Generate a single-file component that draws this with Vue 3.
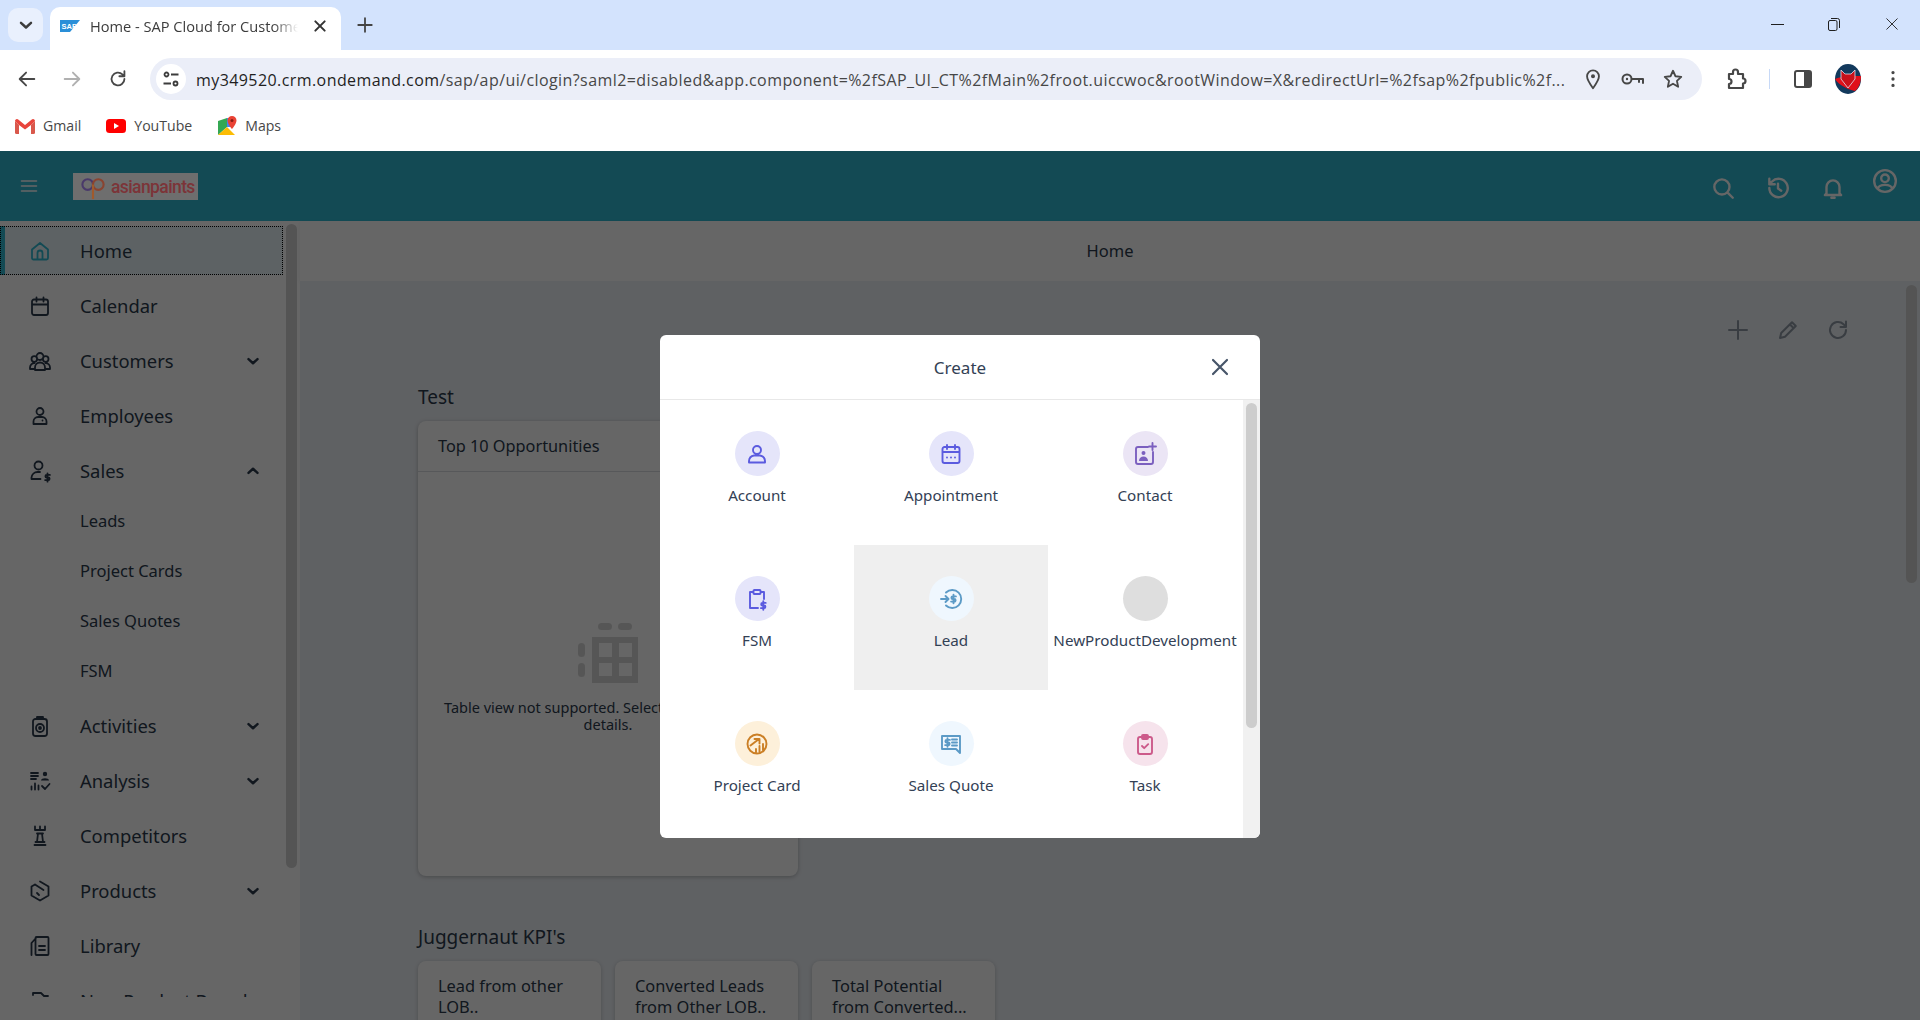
<script setup>
import { h } from 'vue'

const c = (x, y, r) => `M${x - r} ${y}a${r} ${r} 0 1 0 ${2 * r} 0a${r} ${r} 0 1 0 ${-2 * r} 0`
const rr = (x, y, w, he, r) =>
  `M${x + r} ${y}h${w - 2 * r}a${r} ${r} 0 0 1 ${r} ${r}v${he - 2 * r}a${r} ${r} 0 0 1 ${-r} ${r}h${-(w - 2 * r)}a${r} ${r} 0 0 1 ${-r} ${-r}v${-(he - 2 * r)}a${r} ${r} 0 0 1 ${r} ${-r}`
const dollar = (x, y) =>
  `M${x + 2.4} ${y - 2.6}h-3.2a1.3 1.3 0 0 0 0 2.6h1.6a1.3 1.3 0 0 1 0 2.6h-3.2M${x} ${y - 4.2}v8.4`

const icons = {
  home: { s: 'M4 10.5 12 4l8 6.5V19a1.5 1.5 0 0 1-1.5 1.5h-13A1.5 1.5 0 0 1 4 19ZM9.5 20.5V14a2.5 2.5 0 0 1 5 0v6.5' },
  calendar: { s: rr(4, 5.5, 16, 15.5, 2) + 'M4 10.5h16M8.5 3.5v4M15.5 3.5v4' },
  customers: { s: c(12, 7.5, 3.5) + c(6.3, 10, 2.8) + c(17.7, 10, 2.8) + 'M7 21v-2.5a5 5 0 0 1 10 0V21ZM7 20H2v-1.5a4.5 4.5 0 0 1 4.5-4.5M17 20h5v-1.5a4.5 4.5 0 0 0-4.5-4.5' },
  employees: { s: c(12, 7.5, 3.5) + 'M5.5 20V17.5a4.5 4.5 0 0 1 4.5-4.5h4a4.5 4.5 0 0 1 4.5 4.5V20ZM14.5 16.5h.01' },
  sales: { s: c(10.5, 6.5, 4) + 'M3.5 20v-1.5a6 6 0 0 1 6-5.5h2.5M3.5 20h9' + dollar(19.5, 18.5) },
  activities: { s: rr(5, 5, 14, 17, 2.5) + 'M9 5V3h6v2' + c(12, 14, 4) + c(12, 14, 1) },
  analysis: { s: 'M3 4h7M3 7h7M3 10h5M3.5 20.5v-3M7 20.5v-6M10.5 20.5v-4M14 17l3 3 4.5-5', f: c(17, 5, 2.2) + 'M13 11.5c0-3 8-3 8 0Z' },
  competitors: { s: 'M7 2.5v3.5h10V2.5M12 2.5v3.5M9 9.5h6M10 9.5 9 18M14 9.5l1 8.5M7.5 18h9M6.5 21h11' },
  products: { s: 'M12 2.5l8.5 5v9l-8.5 5-8.5-5v-9l3.5-2M7 5.5l8.5 5.5M9 14l2 2' },
  library: { s: rr(7.5, 3, 13, 18, 1) + 'M3.5 21V9L8 4M11 12h6M11 16h6' },
  next: { s: 'M5 6V4h8l3 3h4' },
  down: { s: 'M6 9.5l6 5.5 6-5.5' },
  up: { s: 'M6 14.5l6-5.5 6 5.5' },
  search: { s: c(11, 11, 7) + 'M16 16l5 5' },
  history: { s: 'M4 12a8.5 8.5 0 1 0 2.5-6L4 8.5M4 3.5v5h5M12 8v4.5l3 2' },
  bell: { s: 'M6 17V11a6 6 0 0 1 12 0v6l1.5 1.5h-15ZM10.5 21h3' },
  user: { s: c(12, 12, 10) + c(12, 9.5, 3.5) + 'M5.5 19c1-4.5 12-4.5 13 0' },
  menu: { s: 'M3 6h18M3 12h18M3 18h18' },
  plus: { s: 'M12 3v18M3 12h18' },
  pencil: { s: 'M4 20l1.2-5L16 4.200 19.800 8 9 18.800ZM14 6.500l3.500 3.500' },
  refresh: { s: 'M20 12a8 8 0 1 1-2.500-5.800L20 9M20 3.500V9h-5.500' },
  close: { s: 'M5 5l14 14M19 5 5 19' },
  account: { s: c(12, 8, 4) + 'M4 20.5v-1.5a6 6 0 0 1 5-5.5h6a6 6 0 0 1 5 5.5v1.5Z' },
  appointment: { s: rr(3.5, 5, 17, 16, 2) + 'M3.5 10h17M8 3v4M16 3v4M8 15.5h.01M12 15.5h.01M16 15.5h.01' },
  contact: { s: 'M15 5H5a2 2 0 0 0-2 2v13a2 2 0 0 0 2 2h13a2 2 0 0 0 2-2V10M19.5 1v7M16 4.5h7', f: c(10.5, 11, 2) + 'M6 19c0-3 2-4.5 4.5-4.5S15 16 15 19Z' },
  fsm: { s: 'M8.5 5H5v16h8M15.5 5H19v7' + rr(8.5, 3, 7, 4, .8) + dollar(18.3, 18.5) },
  lead: { s: 'M7 5.5A9 9 0 1 1 7 18.5M2 12h7M6.5 9l3 3-3 3' + dollar(14.5, 12) },
  project: { s: c(12, 12, 9.5) + 'M5.5 13.5 14 7M9.5 7H14.5v4.5M11 20v-3M14.5 20v-6M18 18v-6' },
  quote: { s: 'M3 4h18v17l-4-4H3Z' + dollar(8.5, 10.5) + 'M13 7.5h5M13 10.5h5M13 13.5h5' },
  task: { s: rr(5, 5, 14, 17, 2) + rr(9, 3, 6, 4, 1) + 'M9 14l2.2 2.2 4-4' },
  back: { s: 'M20 12H5M11 5l-7 7 7 7' },
  reload: { s: 'M19 12a7 7 0 1 1-2.2-5.1L19 9M19 3.5V9h-5.5' },
  pin: { s: 'M12 22C8 16.5 5.5 13 5.5 9a6.5 6.5 0 0 1 13 0c0 4-2.5 7.5-6.5 13Z', f: c(12, 9, 2.2) },
  key: { s: c(7, 12, 4.5) + 'M11.5 12H23v4M19 12v3', f: c(7, 12, 1.2) },
  star: { s: 'M12 3l2.7 6 6.3.7-4.7 4.3 1.3 6.5L12 17.2 6.4 20.5l1.3-6.5L3 9.7 9.3 9Z' },
  ext: { s: 'M5 7h4V5a2.5 2.5 0 0 1 5 0v2h5v4.5a2.5 2.5 0 0 1 0 5V21H5v-4a2.5 2.5 0 0 0 0-5Z' },
  dots: { f: c(12, 5, 1.8) + c(12, 12, 1.8) + c(12, 19, 1.8) }
}

const Ico = (props) => {
  const icon = icons[props.name]
  const kids = []
  if (icon.s) kids.push(h('path', { d: icon.s, fill: 'none', stroke: 'currentColor', 'stroke-width': props.w || 1.8, 'stroke-linecap': 'round', 'stroke-linejoin': 'round' }))
  if (icon.f) kids.push(h('path', { d: icon.f, fill: 'currentColor' }))
  return h('svg', { viewBox: '0 0 24 24', width: props.size || 24, height: props.size || 24 }, kids)
}
Ico.props = ['name', 'size', 'w']

const urlHost = 'my349520.crm.ondemand.com'
const urlRest = '/sap/ap/ui/clogin?saml2=disabled&app.component=%2fSAP_UI_CT%2fMain%2froot.uiccwoc&rootWindow=X&redirectUrl=%2fsap%2fpublic%2f...'

const navItems = [
  { label: 'Home', icon: 'home', active: true },
  { label: 'Calendar', icon: 'calendar' },
  { label: 'Customers', icon: 'customers', arrow: 'down' },
  { label: 'Employees', icon: 'employees' },
  { label: 'Sales', icon: 'sales', arrow: 'up', children: ['Leads', 'Project Cards', 'Sales Quotes', 'FSM'] },
  { label: 'Activities', icon: 'activities', arrow: 'down' },
  { label: 'Analysis', icon: 'analysis', arrow: 'down' },
  { label: 'Competitors', icon: 'competitors' },
  { label: 'Products', icon: 'products', arrow: 'down' },
  { label: 'Library', icon: 'library' },
  { label: 'New Product Board', icon: 'next' }
]

const kpis = [
  ['Lead from other', 'LOB..'],
  ['Converted Leads', 'from Other LOB..'],
  ['Total Potential', 'from Converted...']
]

const createItems = [
  { label: 'Account', icon: 'account', tone: 'indigo' },
  { label: 'Appointment', icon: 'appointment', tone: 'indigo' },
  { label: 'Contact', icon: 'contact', tone: 'purple' },
  { label: 'FSM', icon: 'fsm', tone: 'indigo' },
  { label: 'Lead', icon: 'lead', tone: 'blue', hover: true },
  { label: 'NewProductDevelopment', tone: 'grey' },
  { label: 'Project Card', icon: 'project', tone: 'orange' },
  { label: 'Sales Quote', icon: 'quote', tone: 'blue' },
  { label: 'Task', icon: 'task', tone: 'pink' }
]
</script>

<template>
  <div class="page">
    <div class="tabstrip">
      <div class="tab-list-btn"><Ico name="down" size="20" w="3" /></div>
      <div class="tab">
        <svg class="favicon" viewBox="0 0 20 12" width="20" height="12">
          <path d="M0 0h20L10 12H0Z" fill="#2a8fd8" />
          <text x="1.5" y="8.5" font-size="7.5" font-weight="700" fill="#fff" font-family="Liberation Sans">SAP</text>
        </svg>
        <span class="tab-title">Home - SAP Cloud for Customer</span>
        <Ico class="tab-close" name="close" size="16" w="3" />
      </div>
      <Ico class="new-tab" name="plus" size="18" w="2.4" />
      <div class="win-controls">
        <span class="win-min"></span>
        <svg viewBox="0 0 14 14" width="14" height="14" fill="none" stroke="#1f1f1f">
          <rect x="1.5" y="3.5" width="8.5" height="10" rx="1.5" />
          <path d="M4 1.5h6.5a2 2 0 0 1 2 2V11" />
        </svg>
        <Ico name="close" size="18" w="1.2" />
      </div>
    </div>

    <div class="toolbar">
      <Ico class="tb-icon back" name="back" size="22" w="2" />
      <Ico class="tb-icon forward" name="back" size="22" w="2" />
      <Ico class="tb-icon reload" name="reload" size="22" w="2" />
      <div class="omnibox">
        <span class="site-info">
          <svg viewBox="0 0 18 18" width="18" height="18" fill="none" stroke="#3c3c3c" stroke-width="1.8">
            <circle cx="4.5" cy="4.5" r="2" />
            <circle cx="13.5" cy="13.5" r="2" />
            <path d="M9 4.5h7.5M1.5 13.5H9" />
          </svg>
        </span>
        <span class="url"><b>{{ urlHost }}</b>{{ urlRest }}</span>
        <Ico class="omni-icon" name="pin" size="22" w="2" />
        <Ico class="omni-icon key" name="key" size="24" w="2" />
        <Ico class="omni-icon" name="star" size="22" w="2" />
      </div>
      <Ico class="tb-icon ext" name="ext" size="24" w="2.2" />
      <span class="tb-divider"></span>
      <svg class="panel-icon" viewBox="0 0 18 18" width="18" height="18">
        <rect x="1" y="1" width="16" height="16" rx="2" fill="#fff" stroke="#474747" stroke-width="2" />
        <rect x="10" y="1" width="7" height="16" fill="#474747" />
      </svg>
      <svg class="avatar" viewBox="0 0 26 30" width="26" height="30">
        <ellipse cx="13" cy="15" rx="13" ry="15" fill="#12395c" />
        <path d="M0 15c6-3 20-3 26-3 0 6-2 12-6 15-8-2-16-6-20-12Z" fill="#e0101a" />
        <path d="M6 6l4 4h6l4-4v9l-7 9-7-9Z" fill="#c8101a" stroke="#dde" stroke-width=".8" />
      </svg>
      <Ico class="tb-icon dots" name="dots" size="22" />
    </div>

    <div class="bookmarks">
      <span class="bm">
        <svg viewBox="0 0 20 16" width="20" height="16">
          <path d="M0 3v11.5A1.5 1.5 0 0 0 1.500 16H4V7Z" fill="#d9584c" />
          <path d="M20 3v11.500a1.500 1.500 0 0 1-1.500 1.500H16V7Z" fill="#d9584c" />
          <path d="M0 3a2 2 0 0 1 3.200-1.600L10 7l6.800-5.600A2 2 0 0 1 20 3L16 7l-6 4.500L4 7Z" fill="#e8453c" />
        </svg>
        Gmail
      </span>
      <span class="bm">
        <svg viewBox="0 0 20 16" width="20" height="16">
          <rect width="20" height="14" y="1" rx="3.500" fill="#f00" />
          <path d="M8 5l5 3-5 3Z" fill="#fff" />
        </svg>
        YouTube
      </span>
      <span class="bm">
        <svg viewBox="0 0 20 20" width="20" height="20">
          <path d="M1 5l9-3v9l-9 8Z" fill="#34a853" />
          <path d="M1 19l9-8 8 8Z" fill="#fbbc04" />
          <path d="M10 2h6v9h-6Z" fill="#4285f4" />
          <path d="M15 0a4.500 4.500 0 0 1 4.500 4.500C19.500 8 15 13 15 13s-4.500-5-4.500-8.500A4.500 4.500 0 0 1 15 0Z" fill="#ea4335" />
          <circle cx="15" cy="4.500" r="1.500" fill="#8a1c14" />
        </svg>
        Maps
      </span>
    </div>

    <div class="app">
      <header class="app-header">
        <Ico class="hamburger" name="menu" size="20" w="1.9" />
        <div class="logo">
          <svg viewBox="0 0 26 28" width="26" height="27" fill="none" stroke-width="2.2">
            <circle cx="7.500" cy="12" r="5.500" stroke="#4a3a6a" />
            <circle cx="18.500" cy="12" r="5.500" stroke="#8a4430" />
            <path d="M13 12v15" stroke="#a05a2c" />
          </svg>
          <span>asianpaints</span>
        </div>
        <div class="header-icons">
          <Ico name="search" size="26" w="2.2" />
          <Ico name="history" size="26" w="2.2" />
          <Ico name="bell" size="26" w="2.2" />
          <Ico class="raised" name="user" size="26" w="2.2" />
        </div>
      </header>

      <div class="main">
        <aside class="sidebar">
          <nav class="nav">
            <template v-for="item in navItems" :key="item.label">
              <div class="nav-item" :class="{ active: item.active }">
                <Ico class="nav-icon" :name="item.icon" />
                <span class="nav-label">{{ item.label }}</span>
                <Ico v-if="item.arrow" class="nav-arrow" :name="item.arrow" size="18" w="3.2" />
              </div>
              <div v-for="child in item.children" :key="child" class="nav-sub">{{ child }}</div>
            </template>
          </nav>
          <div class="scroll-track"><div class="side-thumb"></div></div>
        </aside>

        <section class="content">
          <div class="content-title">Home</div>
          <div class="content-body">
            <div class="content-inner">
              <div class="tools">
                <Ico name="plus" size="24" w="2" />
                <Ico name="pencil" size="24" w="2" />
                <Ico name="refresh" size="24" w="2" />
              </div>
              <h2 class="group-title">Test</h2>
              <div class="card">
                <div class="card-head">Top 10 Opportunities</div>
                <div class="card-empty">
                  <svg viewBox="0 0 60 60" width="60" height="60" fill="#d8d8d8">
                    <rect x="20" y="0" width="14" height="7" rx="3.500" />
                    <rect x="40" y="0" width="14" height="7" rx="3.500" />
                    <rect x="0" y="20" width="7" height="14" rx="3.500" />
                    <rect x="0" y="40" width="7" height="14" rx="3.500" />
                    <path fill-rule="evenodd" d="M14 14h47v46H14ZM21 20v14h13V20ZM41 20v14h13V20ZM21 40v13h13V40ZM41 40v13h13V40Z" />
                  </svg>
                  <p>Table view not supported. Select a chart view for<br />details.</p>
                </div>
              </div>
              <h2 class="group-title kpi-title">Juggernaut KPI's</h2>
              <div class="kpi-row">
                <div v-for="kpi in kpis" :key="kpi[0]" class="kpi">{{ kpi[0] }}<br />{{ kpi[1] }}</div>
              </div>
            </div>
            <div class="content-scroll"><div class="content-thumb"></div></div>
          </div>
        </section>
      </div>

      <div class="scrim">
        <div class="modal">
          <div class="modal-head">
            <span>Create</span>
            <Ico class="modal-close" name="close" size="24" w="2.2" />
          </div>
          <div class="modal-body">
            <div class="create-grid">
              <div v-for="item in createItems" :key="item.label" class="create-cell" :class="{ hover: item.hover }">
                <span class="create-circle" :class="item.tone">
                  <Ico v-if="item.icon" :name="item.icon" size="24" w="1.9" />
                </span>
                <span class="create-label">{{ item.label }}</span>
              </div>
            </div>
            <div class="modal-track"><div class="modal-thumb"></div></div>
          </div>
        </div>
      </div>
    </div>
  </div>
</template>

<style>
html,
body {
  margin: 0;
  overflow: hidden;
}
</style>

<style scoped>
.page {
  width: 1920px;
  height: 1020px;
  display: flex;
  flex-direction: column;
  overflow: hidden;
  background: #fff;
  font-family: "Noto Sans", sans-serif;
}

/* browser chrome */
.tabstrip {
  height: 50px;
  flex: none;
  display: flex;
  align-items: flex-start;
  background: #d3e3fd;
  box-sizing: border-box;
  font-family: "Open Sans", sans-serif;
}
.tab-list-btn {
  width: 35px;
  height: 34px;
  margin: 8px 7px 0 8px;
  border-radius: 10px;
  background: #e9f0fd;
  color: #3c3c3c;
  display: flex;
  align-items: center;
  justify-content: center;
}
.tab {
  width: 291px;
  height: 43px;
  margin-top: 7px;
  background: #fff;
  border-radius: 10px 10px 0 0;
  display: flex;
  align-items: center;
  box-sizing: border-box;
  padding: 0 11px 6px 10px;
  color: #3c3c3c;
}
.favicon {
  flex: none;
  margin-right: 10px;
}
.tab-title {
  width: 208px;
  font-size: 14.6px;
  white-space: nowrap;
  overflow: hidden;
  -webkit-mask-image: linear-gradient(to right, #000 88%, transparent);
  mask-image: linear-gradient(to right, #000 88%, transparent);
}
.tab-close {
  margin-left: 14px;
  color: #333;
}
.new-tab {
  margin: 16px 0 0 15px;
  color: #444;
}
.win-controls {
  margin: 15px 19px 0 auto;
  display: flex;
  align-items: center;
  gap: 42px;
  color: #1f1f1f;
}
.win-min {
  width: 13px;
  height: 1px;
  background: #1f1f1f;
  margin-right: 1px;
}

.toolbar {
  height: 50px;
  flex: none;
  display: flex;
  align-items: center;
  background: #fff;
  color: #474747;
  border-radius: 10px 10px 0 0;
  font-family: "Open Sans", sans-serif;
}
.back {
  margin-left: 16px;
}
.forward {
  margin-left: 23px;
  color: #b0b0b0;
  transform: scaleX(-1);
}
.reload {
  margin-left: 24px;
}
.omnibox {
  width: 1552px;
  height: 42px;
  margin: 8px 0 0 21px;
  flex: none;
  border-radius: 21px;
  background: #ebeef8;
  display: flex;
  align-items: center;
  box-sizing: border-box;
  padding: 0 14px 0 6px;
}
.toolbar > svg {
  margin-top: 8px;
  flex: none;
}
.site-info {
  width: 30px;
  height: 30px;
  border-radius: 50%;
  background: #fff;
  flex: none;
  display: flex;
  align-items: center;
  justify-content: center;
  margin-right: 10px;
}
.url {
  width: 1372px;
  flex: none;
  padding-top: 1px;
  font-size: 16px;
  letter-spacing: .42px;
  white-space: nowrap;
  overflow: hidden;
  color: #474747;
}
.url b {
  font-weight: 400;
  color: #1f1f1f;
}
.omni-icon {
  flex: none;
  color: #474747;
  margin-left: 18px;
}
.url + .omni-icon {
  margin-left: 14px;
}
.omni-icon.key {
  margin-left: 16px;
}
.ext {
  margin-left: 22px;
  color: #474747;
}
.tb-divider {
  width: 1px;
  height: 20px;
  margin: 8px 0 0 21px;
  background: #c7d9f7;
}
.panel-icon {
  margin-left: 24px;
}
.avatar {
  margin-left: 23px;
}
.dots {
  margin-left: 21px;
}

.bookmarks {
  height: 51px;
  flex: none;
  display: flex;
  align-items: center;
  background: #fff;
  padding-left: 15px;
  gap: 25px;
  font-family: "Open Sans", sans-serif;
  font-size: 14.1px;
  color: #474747;
  box-sizing: border-box;
}
.bm {
  display: flex;
  align-items: center;
  gap: 8px;
}

/* app */
.app {
  position: relative;
  height: 869px;
  flex: none;
  display: flex;
  flex-direction: column;
  color: #334155;
}
.app-header {
  height: 70px;
  flex: none;
  display: flex;
  align-items: center;
  background: #30b9d2;
  color: #fff;
  padding-left: 19px;
  box-sizing: border-box;
}
.logo {
  position: relative;
  z-index: 2;
  width: 125px;
  height: 27px;
  margin: 1px 0 0 34px;
  background: #6e6e6e;
  display: flex;
  align-items: center;
  gap: 5px;
  padding-left: 7px;
  box-sizing: border-box;
  color: #7c3438;
  font-family: "Roboto", sans-serif;
  font-size: 17.5px;
  font-weight: 500;
  letter-spacing: -.6px;
}
.header-icons {
  margin-left: auto;
  padding-right: 22px;
  display: flex;
  gap: 29px;
  margin-top: 3px;
}
.raised {
  margin: -7px 0 0 -3px;
}

.main {
  flex: 1;
  min-height: 0;
  display: flex;
}
.sidebar {
  width: 300px;
  flex: none;
  display: flex;
  background: #fff;
}
.nav {
  width: 283px;
  height: 776px;
  padding-top: 5px;
  box-sizing: border-box;
  overflow: hidden;
  color: #2b3a4d;
}
.nav-item {
  height: 49px;
  margin-bottom: 6px;
  display: flex;
  align-items: center;
  padding-left: 28px;
  box-sizing: border-box;
  font-size: 18.4px;
}
.nav-item.active {
  background: #e8f6f9;
  box-shadow: inset 5px 0 0 #30b9d2;
  outline: 1px dotted #000;
  outline-offset: -1px;
}
.nav-item.active .nav-icon {
  color: #30b9d2;
}
.nav-icon {
  flex: none;
}
.nav-label {
  margin-left: 28px;
  white-space: nowrap;
}
.nav-arrow {
  margin-left: auto;
  margin-right: 21px;
}
.nav-sub {
  height: 40px;
  margin-bottom: 10px;
  padding: 0 0 2px 80px;
  box-sizing: border-box;
  display: flex;
  align-items: center;
  font-size: 16.5px;
}
.scroll-track {
  width: 17px;
  padding: 3px 3px 0;
  box-sizing: border-box;
}
.side-thumb {
  height: 644px;
  border-radius: 6px;
  background: #d2d2d2;
}

.content {
  flex: 1;
  min-width: 0;
  display: flex;
  flex-direction: column;
}
.content-title {
  height: 60px;
  flex: none;
  padding-bottom: 1px;
  box-sizing: border-box;
  display: flex;
  align-items: center;
  justify-content: center;
  background: #fff;
  font-size: 16.5px;
  color: #2b3a4d;
  box-shadow: 0 2px 6px rgba(0, 0, 0, .05);
}
.content-body {
  flex: 1;
  min-height: 0;
  display: flex;
  background: #eef2f7;
}
.content-inner {
  flex: 1;
  min-width: 0;
  padding: 37px 0 0 118px;
  box-sizing: border-box;
  overflow: hidden;
  color: #2b3a4d;
}
.tools {
  display: flex;
  justify-content: flex-end;
  gap: 26px;
  padding-right: 53px;
  height: 24px;
  color: #8e99a5;
}
.group-title {
  margin: 42px 0 0;
  font-size: 19px;
  font-weight: 400;
  line-height: 26px;
}
.card {
  width: 380px;
  height: 455px;
  margin-top: 11px;
  background: #fff;
  border-radius: 8px;
  box-shadow: 0 1px 4px rgba(0, 0, 0, .25);
  display: flex;
  flex-direction: column;
}
.card-head {
  height: 50px;
  flex: none;
  display: flex;
  align-items: center;
  padding-left: 20px;
  font-size: 16.3px;
  border-bottom: 1px solid #d9dde2;
}
.card-empty {
  flex: 1;
  display: flex;
  flex-direction: column;
  align-items: center;
  padding-top: 151px;
  font-size: 14.5px;
  text-align: center;
}
.card-empty p {
  margin: 16px 0 0;
  line-height: 17px;
  white-space: nowrap;
}
.kpi-title {
  margin-top: 48px;
}
.kpi-row {
  display: flex;
  gap: 14px;
  margin-top: 11px;
}
.kpi {
  width: 183px;
  height: 120px;
  padding: 14px 20px 0;
  box-sizing: border-box;
  background: #fff;
  border-radius: 8px;
  box-shadow: 0 1px 4px rgba(0, 0, 0, .2);
  font-size: 16.4px;
  line-height: 21px;
  white-space: nowrap;
}
.content-scroll {
  width: 17px;
  flex: none;
  padding: 4px 3px 0;
  box-sizing: border-box;
}
.content-thumb {
  height: 298px;
  border-radius: 6px;
  background: #d2d2d2;
}

/* modal */
.scrim {
  position: absolute;
  inset: 0;
  z-index: 1;
  background: rgba(0, 0, 0, .6);
  display: flex;
  align-items: center;
  justify-content: center;
}
.modal {
  width: 600px;
  height: 503px;
  margin-top: 2px;
  background: #fff;
  border-radius: 6px;
  display: flex;
  flex-direction: column;
  overflow: hidden;
}
.modal-head {
  height: 65px;
  flex: none;
  display: flex;
  align-items: center;
  justify-content: center;
  position: relative;
  font-size: 17px;
  border-bottom: 1px solid #e8e8e8;
  box-sizing: border-box;
}
.modal-close {
  position: absolute;
  right: 28px;
  top: 20px;
  color: #475569;
}
.modal-body {
  flex: 1;
  min-height: 0;
  display: flex;
}
.create-grid {
  width: 583px;
  flex: none;
  display: grid;
  grid-template-columns: repeat(3, 194px);
  grid-auto-rows: 145px;
}
.create-cell {
  display: flex;
  flex-direction: column;
  align-items: center;
  padding-top: 31px;
  box-sizing: border-box;
}
.create-cell.hover {
  background: #efefef;
}
.create-circle {
  width: 45px;
  height: 45px;
  border-radius: 50%;
  display: flex;
  align-items: center;
  justify-content: center;
}
.indigo {
  background: #e5e5fa;
  color: #5b5bdf;
}
.purple {
  background: #ebe5f5;
  color: #7b5fbf;
}
.blue {
  background: #eff7fe;
  color: #5b9ac6;
}
.grey {
  background: #dedede;
}
.orange {
  background: #fdf0da;
  color: #cb7f25;
}
.pink {
  background: #f6e3ec;
  color: #cc5a8a;
}
.create-label {
  margin-top: 9px;
  font-size: 15.2px;
  line-height: 20px;
  white-space: nowrap;
}
.modal-track {
  flex: 1;
  background: #f1f1f1;
  padding: 3px 3px 0;
  box-sizing: border-box;
}
.modal-thumb {
  height: 325px;
  border-radius: 6px;
  background: #cdcdcd;
}
</style>
